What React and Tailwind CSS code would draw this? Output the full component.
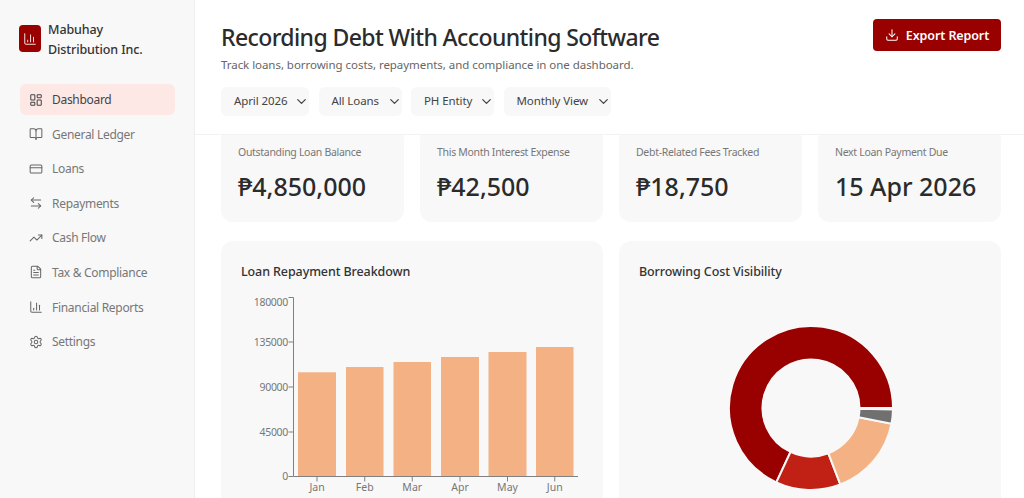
import React from 'react';
import {
  LayoutDashboard,
  BookOpen,
  CreditCard,
  ArrowLeftRight,
  TrendingUp,
  FileText,
  ChartColumn,
  Settings,
  Download,
  ChevronDown,
} from 'lucide-react';

const navItems = [
  { label: 'Dashboard', icon: LayoutDashboard, active: true },
  { label: 'General Ledger', icon: BookOpen },
  { label: 'Loans', icon: CreditCard },
  { label: 'Repayments', icon: ArrowLeftRight },
  { label: 'Cash Flow', icon: TrendingUp },
  { label: 'Tax & Compliance', icon: FileText },
  { label: 'Financial Reports', icon: ChartColumn },
  { label: 'Settings', icon: Settings },
];

const filters = [
  { label: 'April 2026', width: 'w-[88px]' },
  { label: 'All Loans', width: 'w-[83px]' },
  { label: 'PH Entity', width: 'w-[83px]' },
  { label: 'Monthly View', width: 'w-[107px]' },
];

const stats = [
  { label: 'Outstanding Loan Balance', value: '₱4,850,000' },
  { label: 'This Month Interest Expense', value: '₱42,500' },
  { label: 'Debt-Related Fees Tracked', value: '₱18,750' },
  { label: 'Next Loan Payment Due', value: '15 Apr 2026' },
];

const bars = [
  { month: 'Jan', x: 298, w: 38, top: 372.3 },
  { month: 'Feb', x: 346, w: 37.5, top: 367 },
  { month: 'Mar', x: 393.5, w: 37.5, top: 362 },
  { month: 'Apr', x: 441, w: 38, top: 357 },
  { month: 'May', x: 488.5, w: 38, top: 352 },
  { month: 'Jun', x: 536, w: 37.5, top: 347 },
];

const yTicks = [
  { label: '180000', y: 297.5, textY: 305.5 },
  { label: '135000', y: 342, textY: 346 },
  { label: '90000', y: 387, textY: 391 },
  { label: '45000', y: 432, textY: 436 },
  { label: '0', y: 476.5, textY: 480 },
];

const donutParts = [
  { from: 0, to: 245, color: '#990000' },
  { from: 245, to: 291, color: '#c02114' },
  { from: 291, to: 349, color: '#f4b183' },
  { from: 349, to: 359, color: '#707070' },
];

const arcPath = (from, to, outer, inner) => {
  const pt = (deg, r) => {
    const a = (deg * Math.PI) / 180;
    return `${(100 + r * Math.cos(a)).toFixed(2)} ${(100 - r * Math.sin(a)).toFixed(2)}`;
  };
  const large = to - from > 180 ? 1 : 0;
  return `M${pt(from, outer)} A${outer} ${outer} 0 ${large} 0 ${pt(to, outer)} L${pt(to, inner)} A${inner} ${inner} 0 ${large} 1 ${pt(from, inner)} Z`;
};

const Sidebar = () => (
  <aside className="w-[195px] shrink-0 h-full bg-[#f8f8f8] border-r border-[#eeeeee] pl-[20px] pr-[19px]">
    <div className="flex items-start gap-[7px] pt-[20px] h-[84px] -ml-px">
      <div className="w-[22px] h-[27px] mt-[5px] rounded-[4px] bg-[#990000] flex items-center justify-center">
        <ChartColumn size={14} color="#ffffff" strokeWidth={1.5} />
      </div>
      <div className="text-[12.5px] leading-[19.5px] tracking-[-0.1px] font-medium text-[#333333]">
        Mabuhay
        <br />
        Distribution Inc.
      </div>
    </div>
    <nav className="flex flex-col gap-[3.6px]">
      {navItems.map(({ label, icon: Icon, active }) => (
        <div
          key={label}
          className={`flex items-center gap-[9px] h-[31px] pl-[9px] rounded-md text-[12px] tracking-[-0.3px] ${
            active ? 'bg-[#fde8e6] text-[#444444]' : 'text-[#777777]'
          }`}
        >
          <Icon size={14} strokeWidth={1.75} color={active ? '#444444' : '#666666'} />
          <span className="pt-px">{label}</span>
        </div>
      ))}
    </nav>
  </aside>
);

const Header = () => (
  <header className="relative z-10 h-[135px] shrink-0 bg-white border-b border-[#f2f2f2] pl-[26px] pr-[23px] flex justify-between items-start">
    <div>
      <h1 className="pt-[21px] text-[23px] tracking-[-0.6px] leading-[32px] font-medium text-[#2b2b2b]">
        Recording Debt With Accounting Software
      </h1>
      <p className="mt-[3px] text-[11.5px] leading-[18px] tracking-[-0.05px] text-[#666666]">
        Track loans, borrowing costs, repayments, and compliance in one dashboard.
      </p>
      <div className="flex gap-[9.5px] mt-[13px]">
        {filters.map((f) => (
          <div
            key={f.label}
            className={`${f.width} h-[28px] flex items-center justify-between pl-[13px] rounded-md bg-[#f8f8f8] shadow-[0_1px_1px_rgba(0,0,0,0.03)] text-[11.5px] tracking-[-0.1px] text-[#444444]`}
          >
            <span>{f.label}</span>
            <ChevronDown size={15} strokeWidth={2} color="#444444" />
          </div>
        ))}
      </div>
    </div>
    <button className="mt-[19px] w-[128px] h-[32px] flex items-center justify-center gap-[7px] rounded-[4px] bg-[#990000] text-white text-[12.5px] tracking-[-0.1px] font-semibold">
      <Download size={14} strokeWidth={1.75} />
      <span className="pt-[3px]">Export Report</span>
    </button>
  </header>
);

const StatCard = ({ label, value }) => (
  <div className="h-[94px] rounded-xl bg-[#f8f8f8] pl-[17px] pt-[16px]">
    <div className="text-[10.5px] leading-[16px] tracking-[-0.3px] text-[#777777]">{label}</div>
    <div className="mt-[9px] text-[25px] leading-[34px] font-medium text-[#2b2b2b]">{value}</div>
  </div>
);

const BarChart = () => (
  <svg width="382" height="300" viewBox="221 241 382 300" className="absolute left-0 top-0">
    {bars.map((b) => (
      <rect key={b.month} x={b.x} y={b.top} width={b.w} height={476.5 - b.top} fill="#f4b183" />
    ))}
    <path d="M293.5 297.5V476.5H578" fill="none" stroke="#808080" strokeWidth="1" />
    {yTicks.map((t) => (
      <g key={t.label}>
        <path d={`M288.5 ${t.y}H293.5`} stroke="#808080" strokeWidth="1" />
        <text x="288" y={t.textY} textAnchor="end" fontSize="10.5" letterSpacing="-0.3" fill="#777777">
          {t.label}
        </text>
      </g>
    ))}
    {bars.map((b) => (
      <g key={b.month}>
        <path d={`M${b.x + b.w / 2} 476.5v5`} stroke="#808080" strokeWidth="1" />
        <text x={b.x + b.w / 2} y="490.5" textAnchor="middle" fontSize="10.5" fill="#777777">
          {b.month}
        </text>
      </g>
    ))}
  </svg>
);

const Donut = () => (
  <svg width="200" height="200" viewBox="0 0 200 200" className="absolute left-[91.5px] top-[66.5px]">
    {donutParts.map((p) => (
      <path key={p.color} d={arcPath(p.from, p.to, 82, 48.5)} fill={p.color} stroke="#f8f8f8" strokeWidth="2" />
    ))}
  </svg>
);

const ChartCard = ({ title, children }) => (
  <div className="relative h-[300px] rounded-xl bg-[#f8f8f8] overflow-hidden">
    <h2 className="absolute z-10 left-[20px] top-[21px] text-[12.5px] leading-[20px] tracking-[-0.1px] font-medium text-[#333333]">
      {title}
    </h2>
    {children}
  </div>
);

export default function App() {
  return (
    <div
      className="flex w-[1024px] h-[498px] overflow-hidden bg-white"
      style={{ fontFamily: '"Noto Sans", "Open Sans", sans-serif' }}
    >
      <Sidebar />
      <main className="flex-1 flex flex-col min-w-0">
        <Header />
        <div className="-mt-[7px] pl-[26px] pr-[23px]">
          <div className="grid grid-cols-4 gap-[16px]">
            {stats.map((s) => (
              <StatCard key={s.label} {...s} />
            ))}
          </div>
          <div className="grid grid-cols-2 gap-[16px] mt-[19px]">
            <ChartCard title="Loan Repayment Breakdown">
              <BarChart />
            </ChartCard>
            <ChartCard title="Borrowing Cost Visibility">
              <Donut />
            </ChartCard>
          </div>
        </div>
      </main>
    </div>
  );
}
